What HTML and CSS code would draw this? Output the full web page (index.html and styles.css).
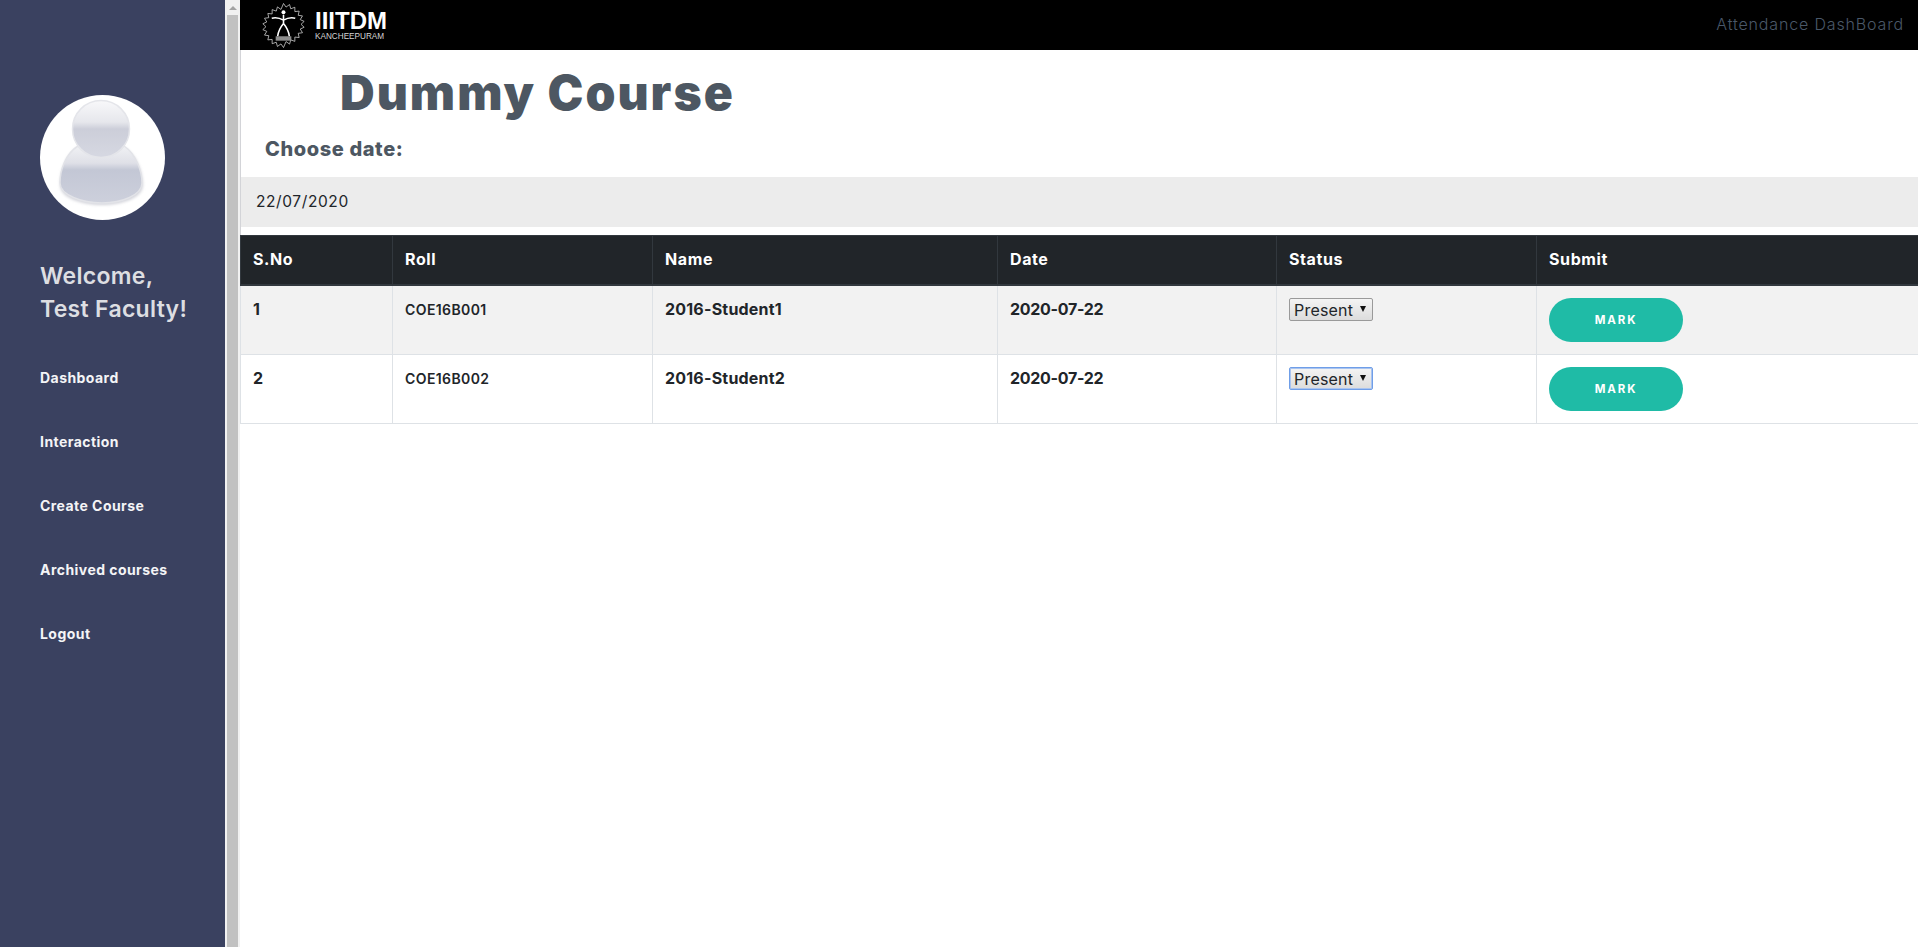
FILE: index.html
```html
<!DOCTYPE html>
<html lang="en">
<head>
    <meta charset="UTF-8">
    <meta name="viewport" content="width=device-width, initial-scale=1.0">
    <title>Attendance DashBoard</title>
    <link rel="stylesheet" href="styles.css">
</head>
<body>
    <aside class="sidebar">
        <svg class="avatar" viewBox="0 0 125 125" role="img" aria-label="Profile picture">
            <defs>
                <linearGradient id="headFill" x1="0" y1="0" x2="0" y2="1">
                    <stop offset="0" stop-color="#f8f8fa"/>
                    <stop offset="0.38" stop-color="#e6e7ec"/>
                    <stop offset="0.5" stop-color="#ccced9"/>
                    <stop offset="1" stop-color="#d6d8e2"/>
                </linearGradient>
                <linearGradient id="bodyFill" x1="0" y1="0" x2="0" y2="1">
                    <stop offset="0" stop-color="#f0f1f4"/>
                    <stop offset="0.3" stop-color="#dfe0e7"/>
                    <stop offset="0.42" stop-color="#c3c7d5"/>
                    <stop offset="1" stop-color="#cdd0dc"/>
                </linearGradient>
                <filter id="softShadow" x="-20%" y="-20%" width="140%" height="140%">
                    <feGaussianBlur stdDeviation="1.5"/>
                </filter>
            </defs>
            <circle cx="62.5" cy="62.5" r="62.5" fill="#fff"/>
            <path d="M38 52C25 60 20 77 20 90C20 103 42 110 62 110C82 110 103 103 103 90C103 77 97 60 84 52C74 66 48 66 38 52Z" fill="#d2d3da" filter="url(#softShadow)"/>
            <path d="M38 51C25 59 20 76 20 88C20 100 42 108 62 108C82 108 102 100 102 88C102 76 96 59 84 51C74 65 48 65 38 51Z" fill="url(#bodyFill)" stroke="#e2e3e8" stroke-width="1.5"/>
            <circle cx="61" cy="34" r="28.5" fill="url(#headFill)" stroke="#e4e5ea" stroke-width="1.5"/>
        </svg>
        <h2 class="welcome">Welcome,<br>Test Faculty!</h2>
        <nav class="side-nav">
            <a href="#">Dashboard</a>
            <a href="#">Interaction</a>
            <a href="#">Create Course</a>
            <a href="#">Archived courses</a>
            <a href="#">Logout</a>
        </nav>
    </aside>
    <div class="scrollbar">
        <span class="scroll-arrow"></span>
        <span class="scroll-thumb"></span>
    </div>
    <div class="page">
        <header class="topbar">
            <div class="brand">
                <svg class="brand-mark" viewBox="0 0 48 48" aria-hidden="true">
                    <path d="M24 1.5l2.6 3.7 3.6-2.6 1.2 4.3 4.2-1.5 0 4.4 4.4-.5-1 4.3 4.4.6-2.3 3.8 4 1.8-3.2 3 3.2 3-4 1.8 2.3 3.8-4.4.6 1 4.3-4.4-.5 0 4.4-4.2-1.5-1.2 4.3-3.6-2.6L24 46.500l-2.6-3.7-3.6 2.6-1.2-4.3-4.2 1.5 0-4.4-4.4.5 1-4.3-4.4-.6 2.3-3.8-4-1.8 3.2-3-3.2-3 4-1.8-2.3-3.8 4.4-.6-1-4.300 4.4.5 0-4.4 4.2 1.5 1.2-4.3 3.6 2.6z" fill="none" stroke="#cfcfcf" stroke-width="0.8"/>
                    <circle cx="24" cy="10.500" r="2" fill="#fff"/>
                    <path d="M12 16.500Q18 15 24 18.500Q30 15 36 16.500M24 13v10M24 22Q19 28 18 35M24 22Q29 28 30 35" fill="none" stroke="#fff" stroke-width="1.600"/>
                    <rect x="16" y="35" width="16" height="4.500" fill="#8c8c8c"/>
                </svg>
                <div class="brand-text">
                    <span class="brand-name">IIITDM</span>
                    <span class="brand-place">KANCHEEPURAM</span>
                </div>
            </div>
            <a class="topbar-title" href="#">Attendance DashBoard</a>
        </header>
        <main class="content">
            <h1 class="course-title">Dummy Course</h1>
            <h3 class="date-label">Choose date:</h3>
            <input class="date-input" type="text" value="22/07/2020">
            <table class="attendance">
                <colgroup>
                    <col class="col-sno">
                    <col class="col-roll">
                    <col class="col-name">
                    <col class="col-date">
                    <col class="col-status">
                    <col class="col-submit">
                </colgroup>
                <thead>
                    <tr>
                        <th>S.No</th>
                        <th>Roll</th>
                        <th>Name</th>
                        <th>Date</th>
                        <th>Status</th>
                        <th>Submit</th>
                    </tr>
                </thead>
                <tbody>
                    <tr>
                        <td>1</td>
                        <td class="roll">COE16B001</td>
                        <td>2016-Student1</td>
                        <td class="day">2020-07-22</td>
                        <td>
                            <span class="select-wrap">
                                <select class="status"><option>Present</option><option>Absent</option></select>
                            </span>
                        </td>
                        <td><button class="mark-btn" type="button">MARK</button></td>
                    </tr>
                    <tr>
                        <td>2</td>
                        <td class="roll">COE16B002</td>
                        <td>2016-Student2</td>
                        <td class="day">2020-07-22</td>
                        <td>
                            <span class="select-wrap">
                                <select class="status focused"><option>Present</option><option>Absent</option></select>
                            </span>
                        </td>
                        <td><button class="mark-btn" type="button">MARK</button></td>
                    </tr>
                </tbody>
            </table>
        </main>
    </div>
</body>
</html>
```

FILE: styles.css
```css
html, body {
    height: 100%;
}
body {
    display: flex;
    margin: 0;
    overflow: hidden;
    font-family: Inter, "Liberation Sans", sans-serif;
    color: #212529;
    background: #fff;
}
a {
    text-decoration: none;
}

/* sidebar */
.sidebar {
    flex: 0 0 225px;
    box-sizing: border-box;
    padding: 95px 0 0 40px;
    background: #3a4160;
}
.avatar {
    display: block;
    width: 125px;
    height: 125px;
}
.welcome {
    margin: 40px 0 0;
    font-size: 23px;
    font-weight: 600;
    line-height: 33px;
    letter-spacing: 0.3px;
    color: #dddee2;
}
.side-nav {
    display: flex;
    flex-direction: column;
    gap: 40px;
    margin-top: 40px;
}
.side-nav a {
    font-size: 14px;
    font-weight: 700;
    line-height: 24px;
    letter-spacing: 0.45px;
    color: #f4f4f6;
}

/* fake scrollbar of the inner frame */
.scrollbar {
    flex: 0 0 15px;
    display: flex;
    flex-direction: column;
    align-items: center;
    background: #f1f1f1;
}
.scroll-arrow {
    width: 0;
    height: 0;
    margin-top: 6px;
    border: 4px solid transparent;
    border-top: 0;
    border-bottom: 4px solid #a3a3a3;
}
.scroll-thumb {
    flex: 1;
    width: 11px;
    margin-top: 5px;
    margin-right: 1px;
    background: #c1c1c1;
}

.page {
    flex: 1;
    min-width: 0;
}

/* top bar */
.topbar {
    display: flex;
    align-items: center;
    justify-content: space-between;
    box-sizing: border-box;
    height: 50px;
    padding: 0 14px 0 22px;
    background: #000;
}
.brand {
    display: flex;
    align-items: center;
    gap: 8px;
    margin-left: -2px;
}
.brand-mark {
    width: 47px;
    height: 47px;
}
.brand-text {
    display: flex;
    flex-direction: column;
    color: #fff;
    font-family: "Liberation Sans", Arial, sans-serif;
}
.brand-name {
    font-size: 24px;
    font-weight: 700;
    line-height: 22px;
}
.brand-place {
    font-size: 8.2px;
    line-height: 9px;
    color: #d5d5d5;
}
.topbar-title {
    padding-bottom: 2px;
    font-size: 16px;
    font-weight: 300;
    letter-spacing: 0.85px;
    color: #4a5869;
}

/* content */
.content {
    border-left: 1px solid #d3d4d8;
}
.course-title {
    margin: 0;
    padding: 15px 0 0 99px;
    font-size: 48px;
    font-weight: 900;
    line-height: 56px;
    letter-spacing: 2px;
    color: #4d5762;
}
.date-label {
    margin: 0;
    padding: 16px 0 0 24px;
    font-size: 20px;
    font-weight: 800;
    line-height: 24px;
    letter-spacing: 0.6px;
    color: #4d5762;
}
.date-input {
    display: block;
    box-sizing: border-box;
    width: 100%;
    height: 50px;
    margin-top: 16px;
    padding: 0 15px 2px;
    border: 0;
    background: #ececec;
    font-family: inherit;
    font-size: 15.5px;
    letter-spacing: 0.6px;
    color: #212529;
}

/* table */
.attendance {
    table-layout: fixed;
    width: calc(100% + 20px);
    margin: 8px 0 0 -1px;
    border-collapse: collapse;
    font-size: 16px;
}
.col-sno { width: 152px; }
.col-roll { width: 260px; }
.col-name { width: 345px; }
.col-date { width: 279px; }
.col-status { width: 260px; }
.attendance th,
.attendance td {
    padding: 12px;
    border: 1px solid #dee2e6;
    text-align: left;
    vertical-align: top;
    line-height: 23px;
    font-weight: 700;
    letter-spacing: 0.2px;
}
.attendance th {
    height: 23px;
    padding-bottom: 13px;
    border-color: #32383e;
    border-bottom-width: 2px;
    background: #212529;
    color: #fff;
    letter-spacing: 0.6px;
}
.attendance td {
    height: 44px;
}
.attendance tbody tr:nth-child(odd) {
    background: #f2f2f2;
}
.attendance .roll {
    font-size: 14px;
    font-weight: 600;
    letter-spacing: 0.4px;
}
.attendance .day {
    letter-spacing: -0.3px;
}

.select-wrap {
    position: relative;
    display: inline-block;
    vertical-align: top;
}
.select-wrap::after {
    content: "";
    position: absolute;
    top: 8px;
    right: 7px;
    border: 3.5px solid transparent;
    border-top: 6px solid #111;
    border-bottom: 0;
    pointer-events: none;
}
.status {
    display: block;
    box-sizing: border-box;
    width: 84px;
    height: 23px;
    padding: 0 0 0 4px;
    border: 1px solid #9a9a9a;
    border-radius: 2px;
    appearance: none;
    background: linear-gradient(#f4f4f4, #dcdcdc);
    font-family: inherit;
    font-size: 16px;
    font-weight: 400;
    letter-spacing: 0.2px;
    color: #212529;
}
.status.focused {
    border-color: #6f9ee8;
    box-shadow: 0 0 0 1px #a9c4f0 inset;
}
.mark-btn {
    display: block;
    width: 134px;
    height: 44px;
    padding: 0;
    border: 0;
    border-radius: 22px;
    background: #1fbba6;
    font-family: inherit;
    font-size: 11.5px;
    font-weight: 700;
    letter-spacing: 1.9px;
    color: #fff;
}
```
